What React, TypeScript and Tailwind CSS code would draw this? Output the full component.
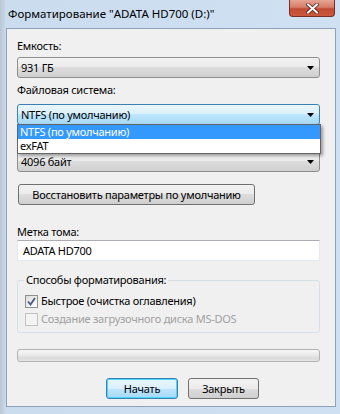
const comboBase =
  'relative w-[303px] h-[21px] rounded-[3px] border flex items-center pl-[3px] text-[11px]'

function Arrow() {
  return (
    <svg width="7" height="4" viewBox="0 0 7 4" className="absolute right-[5px] top-[8px]">
      <path d="M0 0h7L3.5 4z" fill="#000" />
    </svg>
  )
}

function Combo({ value, hot }: { value: string; hot?: boolean }) {
  return (
    <div
      className={
        comboBase +
        (hot
          ? ' border-[#3c7fb1] bg-[linear-gradient(#eaf6fd_0%,#d9f0fc_50%,#bee6fd_50%,#a7d9f5_100%)]'
          : ' border-[#8e8f8f] bg-[linear-gradient(#f2f2f2_0%,#ebebeb_50%,#dddddd_50%,#cfcfcf_100%)]')
      }
    >
      <span>{value}</span>
      <Arrow />
    </div>
  )
}

function Checkbox({ checked, disabled, label }: { checked?: boolean; disabled?: boolean; label: string }) {
  return (
    <div className="flex items-center h-[18px]">
      <div
        className={
          'w-[13px] h-[13px] border flex items-center justify-center ' +
          (disabled
            ? 'border-[#c2c2c2] bg-[#f4f4f4]'
            : 'border-[#8e8f8f] bg-[linear-gradient(135deg,#dcdcdc,#ffffff)]')
        }
      >
        {checked && (
          <svg width="9" height="9" viewBox="0 0 9 9">
            <path d="M1 4.5l2.5 3L8 1" fill="none" stroke="#4a5f80" strokeWidth="1.9" />
          </svg>
        )}
      </div>
      <span className={'ml-[3px] ' + (disabled ? 'text-[#a0a0a0]' : 'text-black')}>{label}</span>
    </div>
  )
}

export default function App() {
  return (
    <div className="w-[340px] h-[414px] bg-[linear-gradient(90deg,#b9c6d3_0px,#cbdcee_6px,#cfe0f2_100%)] flex flex-col font-['Noto_Sans',sans-serif] text-black leading-[16px] overflow-hidden">
      <div className="relative h-[28px] pl-[8px] pt-[6px] text-[11.5px]">
        Форматирование "ADATA HD700 (D:)"
        <div className="absolute left-[289px] top-0 w-[46px] h-[17px] rounded-b-[4px] border border-t-0 border-[#7a2d22] bg-[linear-gradient(#e6a393_0%,#d77e6b_45%,#c24a33_55%,#c95a3e_100%)] flex items-center justify-center">
          <svg width="13" height="11" viewBox="0 0 13 11">
            <path d="M2 1.5l9 8M11 1.5l-9 8" stroke="#5a1f17" strokeWidth="3.6" strokeLinecap="square" />
            <path d="M2 1.5l9 8M11 1.5l-9 8" stroke="#ffffff" strokeWidth="2" strokeLinecap="square" />
          </svg>
        </div>
      </div>

      <div className="relative ml-[6px] w-[330px] h-[379px] border border-[#8ca2bb] bg-[#f0f0f0] flex flex-col pl-[10px] text-[11px] tracking-[-0.25px]">
        <div className="mt-[9px]">Емкость:</div>
        <div className="mt-[3px]">
          <Combo value="931 ГБ" />
        </div>
        <div className="mt-[4px]">Файловая система:</div>
        <div className="mt-[6px]">
          <Combo value="NTFS (по умолчанию)" hot />
        </div>
        <div className="mt-[5px] h-[16px]" />
        <div className="mt-[5px]">
          <Combo value="4096 байт" />
        </div>

        <div className="mt-[12px] ml-[1px] w-[237px] h-[21px] rounded-[3px] border border-[#707070] bg-[linear-gradient(#f2f2f2_0%,#ebebeb_50%,#dddddd_50%,#cfcfcf_100%)] flex items-center justify-center">
          Восстановить параметры по умолчанию
        </div>

        <div className="mt-[19px]">Метка тома:</div>
        <div className="w-[303px] h-[21px] border border-[#e3e9ef] border-t-[#abadb3] bg-white flex items-center pl-[5px]">
          ADATA HD700
        </div>

        <div className="relative mt-[19px] w-[303px] h-[53px] rounded-[3px] border border-[#d5dfe5] pl-[7px] pt-[11px]">
          <span className="absolute left-[6px] top-[-9px] bg-[#f0f0f0] px-[2px]">Способы форматирования:</span>
          <Checkbox checked label="Быстрое (очистка оглавления)" />
          <Checkbox disabled label="Создание загрузочного диска MS-DOS" />
        </div>

        <div className="mt-[16px] w-[303px] h-[13px] rounded-[3px] border border-[#b2b2b2] bg-[linear-gradient(#f6f6f6_0%,#ececec_40%,#dadada_75%,#e6e6e6_100%)]" />

        <div className="mt-[16px] flex gap-[10px] pl-[89px]">
          <div className="w-[72px] h-[21px] rounded-[3px] border border-[#3c7fb1] shadow-[inset_0_0_0_1px_#48d7ff] bg-[linear-gradient(#eaf6fd_0%,#d9f0fc_50%,#bee6fd_50%,#a7d9f5_100%)] flex items-center justify-center">
            Начать
          </div>
          <div className="w-[71px] h-[21px] rounded-[3px] border border-[#707070] bg-[linear-gradient(#f2f2f2_0%,#ebebeb_50%,#dddddd_50%,#cfcfcf_100%)] flex items-center justify-center">
            Закрыть
          </div>
        </div>

        <div className="absolute left-[10px] top-[95px] w-[304px] h-[30px] border border-[#646464] bg-white shadow-[2px_2px_3px_rgba(0,0,0,0.35)] flex flex-col leading-[14px]">
          <div className="h-[14px] bg-[#3399ff] text-white pl-[2px]">NTFS (по умолчанию)</div>
          <div className="h-[14px] pl-[2px]">exFAT</div>
        </div>
      </div>
    </div>
  )
}
